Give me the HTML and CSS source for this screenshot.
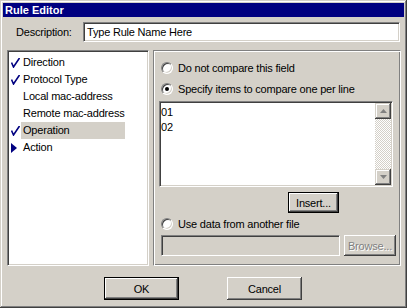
FILE: index.html
```html
<!DOCTYPE html>
<html>
<head>
<meta charset="utf-8">
<link rel="stylesheet" href="styles.css">
</head>
<body>
<div class="window">
  <div class="titlebar">Rule Editor</div>
  <div class="desc-row">
    <span class="desc-label">Description:</span>
    <div class="field desc-field">Type Rule Name Here</div>
  </div>
  <div class="main">
    <div class="list">
      <div class="item"><span class="mark"><svg width="9" height="10" viewBox="0 0 9 10"><path d="M0.5 4.5 L2.5 9 L8.5 0" fill="none" stroke="#000080" stroke-width="1.6"/></svg></span><span class="label">Direction</span></div>
      <div class="item"><span class="mark"><svg width="9" height="10" viewBox="0 0 9 10"><path d="M0.5 4.5 L2.5 9 L8.5 0" fill="none" stroke="#000080" stroke-width="1.6"/></svg></span><span class="label">Protocol Type</span></div>
      <div class="item"><span class="mark"></span><span class="label">Local mac-address</span></div>
      <div class="item"><span class="mark"></span><span class="label">Remote mac-address</span></div>
      <div class="item"><span class="mark"><svg width="9" height="10" viewBox="0 0 9 10"><path d="M0.5 4.5 L2.5 9 L8.5 0" fill="none" stroke="#000080" stroke-width="1.6"/></svg></span><span class="label selected">Operation</span></div>
      <div class="item"><span class="mark"><svg width="6" height="10" viewBox="0 0 6 10"><path d="M0 0 L6 5 L0 10 Z" fill="#000080"/></svg></span><span class="label">Action</span></div>
    </div>
    <div class="group">
      <div class="radio-row r1"><span class="radio"></span><span>Do not compare this field</span></div>
      <div class="radio-row r2"><span class="radio checked"></span><span>Specify items to compare one per line</span></div>
      <div class="textbox">
        <div class="text-lines">01<br>02</div>
        <div class="scrollbar">
          <div class="sbtn"><svg width="7" height="4" viewBox="0 0 7 4"><path d="M3.5 0 L7 4 L0 4 Z" fill="#808080"/></svg></div>
          <div class="track"></div>
          <div class="sbtn"><svg width="7" height="4" viewBox="0 0 7 4"><path d="M0 0 L7 0 L3.5 4 Z" fill="#808080"/></svg></div>
        </div>
      </div>
      <div class="insert-row"><button class="btn default insert">Insert...</button></div>
      <div class="radio-row r3"><span class="radio"></span><span>Use data from another file</span></div>
      <div class="file-row">
        <div class="field disabled-field"></div>
        <button class="btn browse" disabled>Browse...</button>
      </div>
    </div>
  </div>
  <div class="footer">
    <button class="btn default ok">OK</button>
    <button class="btn cancel">Cancel</button>
  </div>
</div>
</body>
</html>
```
FILE: styles.css
```css
* { box-sizing: border-box; }
html, body { margin: 0; padding: 0; background: #d4d0c8; }
body { font-family: "Liberation Sans", Arial, sans-serif; font-size: 11px; color: #000; letter-spacing: -0.2px; }

.window {
  width: 407px; height: 308px;
  background: #d4d0c8;
  padding: 3px;
  box-shadow: inset -1px -1px 0 #404040, inset 1px 1px 0 #d4d0c8, inset -2px -2px 0 #808080, inset 2px 2px 0 #fff;
  display: flex; flex-direction: column;
}
.titlebar {
  height: 14px; background: #000080; color: #fff;
  font-weight: bold; font-size: 11px; line-height: 14px; padding-left: 2px; letter-spacing: 0;
}
.desc-row {
  display: flex; align-items: center; margin-top: 5px; height: 20px;
}
.desc-label { margin-left: 13px; width: 67px; }
.field {
  background: #fff;
  border: 1px solid; border-color: #808080 #fff #fff #808080;
  box-shadow: inset 1px 1px 0 #404040, inset -1px -1px 0 #d4d0c8;
}
.desc-field {
  width: 317px; height: 20px; padding: 2px 3px; line-height: 15px;
}
.main {
  display: flex; margin-top: 8px; height: 216px; padding-left: 4px; gap: 4px;
}
.list {
  width: 142px; height: 216px; background: #fff;
  border: 1px solid; border-color: #808080 #fff #fff #808080;
  box-shadow: inset 1px 1px 0 #404040, inset -1px -1px 0 #d4d0c8;
  padding: 3px 0 0 2px;
}
.item { display: flex; align-items: center; height: 17px; }
.mark { width: 10px; height: 17px; margin-left: 1px; display: flex; align-items: center; }
.mark svg { display: block; }
.label { padding: 0 0 0 2px; height: 17px; line-height: 17px; }
.label.selected { background: #d4d0c8; width: 104px; }

.group {
  width: 248px; height: 216px;
  border: 1px solid; border-color: #808080 #fff #fff #808080;
  box-shadow: inset 1px 1px 0 #fff, inset -1px -1px 0 #808080;
  display: flex; flex-direction: column;
  padding-left: 5px;
}
.radio-row { display: flex; align-items: center; height: 17px; gap: 5px; padding-left: 2px; }
.r1 { margin-top: 8px; }
.r2 { margin-top: 4px; }
.radio {
  width: 12px; height: 12px; border-radius: 50%;
  background: #fff;
  border: 1px solid; border-color: #808080 #fff #fff #808080;
  box-shadow: inset 1px 1px 0 #404040, inset -1px -1px 0 #d4d0c8;
  display: flex; align-items: center; justify-content: center;
}
.radio.checked::after {
  content: ""; width: 4px; height: 4px; border-radius: 50%; background: #000;
}
.textbox {
  margin-top: 4px; width: 234px; height: 86px;
  background: #fff;
  border: 1px solid; border-color: #808080 #fff #fff #808080;
  box-shadow: inset 1px 1px 0 #404040, inset -1px -1px 0 #d4d0c8;
  padding: 1px; display: flex;
}
.text-lines { flex: 1; padding: 2px 0 0 0; line-height: 15px; }
.scrollbar { width: 16px; display: flex; flex-direction: column; }
.track {
  flex: 1;
  background: repeating-conic-gradient(#fff 0 25%, #d4d0c8 0 50%) 0 0 / 2px 2px;
}
.sbtn {
  width: 16px; height: 16px; background: #d4d0c8;
  box-shadow: inset -1px -1px 0 #404040, inset 1px 1px 0 #d4d0c8, inset -2px -2px 0 #808080, inset 2px 2px 0 #fff;
  display: flex; align-items: center; justify-content: center;
}
.btn {
  font-family: "Liberation Sans", Arial, sans-serif; font-size: 11px; color: #000; letter-spacing: -0.2px;
  background: #d4d0c8; border: none; padding: 0; margin: 0;
  box-shadow: inset -1px -1px 0 #404040, inset 1px 1px 0 #fff, inset -2px -2px 0 #808080, inset 2px 2px 0 #d4d0c8;
}
.btn.default {
  border: 1px solid #000;
  box-shadow: inset -1px -1px 0 #404040, inset 1px 1px 0 #fff, inset -2px -2px 0 #808080;
}
.insert-row { display: flex; margin-top: 5px; padding-left: 129px; }
.insert { width: 51px; height: 21px; }
.r3 { margin-top: 2px; }
.file-row { display: flex; margin-top: 3px; padding-left: 2px; gap: 4px; }
.disabled-field { width: 179px; height: 21px; background: #d4d0c8; }
.browse { width: 52px; height: 21px; color: #808080; text-shadow: 1px 1px 0 #fff; }
.footer {
  display: flex; margin-top: 11px; padding-left: 101px; gap: 48px;
}
.ok, .cancel { width: 75px; height: 23px; }
```
